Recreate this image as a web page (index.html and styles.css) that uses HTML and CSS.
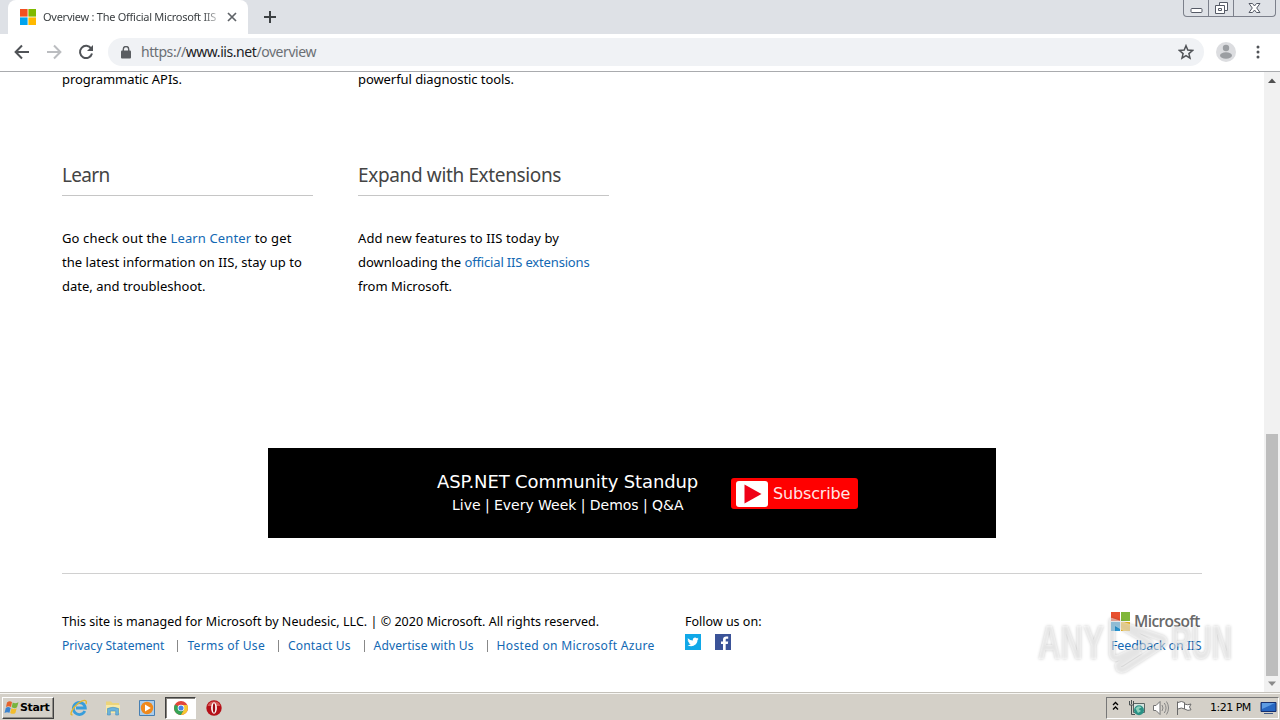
FILE: index.html
```html
<!DOCTYPE html>
<html lang="en">
<head>
<meta charset="utf-8">
<title>Overview : The Official Microsoft IIS Site</title>
<link rel="stylesheet" href="styles.css">
</head>
<body>
<div class="tabstrip">
  <div class="tab">
    <svg class="favicon" width="16" height="16" viewBox="0 0 16 16"><path fill="#f25022" d="M0 0h7.6v7.6H0z"/><path fill="#7fba00" d="M8.4 0H16v7.6H8.4z"/><path fill="#00a4ef" d="M0 8.4h7.6V16H0z"/><path fill="#ffb900" d="M8.4 8.4H16V16H8.4z"/></svg>
    <span class="tab-title">Overview : The Official Microsoft IIS</span>
    <svg class="tab-close" width="10" height="10" viewBox="0 0 10 10"><path d="M1 1l8 8M9 1L1 9" stroke="#5f6368" stroke-width="1.7"/></svg>
  </div>
  <svg class="new-tab" width="12" height="12" viewBox="0 0 12 12"><path d="M6 0v12M0 6h12" stroke="#3c4043" stroke-width="2"/></svg>
  <div class="window-buttons">
    <span class="wb wb-min"><svg width="13" height="16" viewBox="0 0 13 16"><rect x="1" y="8.5" width="11" height="4" rx="1" fill="#fff" stroke="#555a66"/></svg></span>
    <span class="wb wb-max"><svg width="13" height="16" viewBox="0 0 13 16"><g fill="#fff" stroke="#555a66"><path d="M4.500 2.500h8v8h-8z"/><path d="M.5 5.500h9v8h-9z"/><path d="M3.500 8.500h3v2h-3z"/></g></svg></span>
    <span class="wb wb-close"><svg width="13" height="16" viewBox="0 0 13 16"><path d="M1 3.500h3.500l2 2.500 2-2.500H12L8.700 8l3.300 4.500H8.500l-2-2.500-2 2.500H1L4.300 8z" fill="#fff" stroke="#555a66"/></svg></span>
  </div>
</div>
<div class="toolbar">
  <svg class="nav-icon" width="16" height="16" viewBox="0 0 16 16"><path d="M15 8H2M8 1.500L1.600 8 8 14.500" fill="none" stroke="#505357" stroke-width="2"/></svg>
  <svg class="nav-icon" width="16" height="16" viewBox="0 0 16 16"><path d="M1 8h13M8 1.500L14.400 8 8 14.500" fill="none" stroke="#bbbdc0" stroke-width="2"/></svg>
  <svg class="nav-icon" width="16" height="16" viewBox="0 0 16 16"><path d="M13.200 4.600A6.100 6.100 0 1 0 14 9.500" fill="none" stroke="#505357" stroke-width="2"/><path d="M15 1v6H9z" fill="#505357"/></svg>
  <div class="omnibox">
    <svg width="10" height="13" viewBox="0 0 10 13"><rect y="4.500" width="10" height="8" rx="1" fill="#5a5d61"/><path d="M2.300 5V3.200a2.700 2.700 0 0 1 5.400 0V5" fill="none" stroke="#5a5d61" stroke-width="1.400"/></svg>
    <span class="url">https://<b>www.iis.net</b>/overview</span>
    <svg class="star" width="16" height="16" viewBox="0 0 16 16"><path d="M8 1.700l1.800 4.400 4.700.4-3.600 3.100 1.100 4.600L8 11.700l-4 2.500 1.100-4.600L1.500 6.500l4.700-.4z" fill="none" stroke="#505357" stroke-width="1.500"/></svg>
  </div>
  <svg class="avatar" width="20" height="20" viewBox="0 0 20 20"><circle cx="10" cy="10" r="10" fill="#dcdde0"/><circle cx="10" cy="6" r="3.200" fill="#9b9ea2"/><ellipse cx="10" cy="13.500" rx="6" ry="3.200" fill="#9b9ea2"/></svg>
  <svg class="menu" width="4" height="14" viewBox="0 0 4 14"><g fill="#505357"><circle cx="2" cy="2" r="1.500"/><circle cx="2" cy="7" r="1.500"/><circle cx="2" cy="12" r="1.500"/></g></svg>
</div>
<div class="viewport">
  <main class="page">
    <div class="columns">
      <section class="col">
        <p class="line tail"><span class="t1">programmatic APIs.</span></p>
        <h2 class="learn">Learn</h2>
        <p class="line"><span class="t2">Go check out the <a>Learn Center</a> to get</span></p>
        <p class="line"><span class="t3">the latest information on IIS, stay up to</span></p>
        <p class="line">date, and troubleshoot.</p>
      </section>
      <section class="col">
        <p class="line tail"><span class="t5">powerful diagnostic tools.</span></p>
        <h2>Expand with Extensions</h2>
        <p class="line"><span class="t6">Add new features to IIS today by</span></p>
        <p class="line">downloading the <a class="t7">official IIS extensions</a></p>
        <p class="line">from Microsoft.</p>
      </section>
    </div>
    <div class="banner">
      <div class="banner-text">
        <div class="banner-title">ASP.NET Community Standup</div>
        <div class="banner-sub">Live | Every Week | Demos | Q&amp;A</div>
      </div>
      <div class="subscribe">
        <svg width="32" height="26" viewBox="0 0 32 26"><rect width="32" height="26" rx="3" fill="#fff"/><path d="M8.500 3.500L25.500 13l-17 9.500z" fill="#f00017"/></svg>
        <span>Subscribe</span>
      </div>
    </div>
    <footer class="footer">
      <div class="legal">
        <p class="line"><span class="f1">This site is managed for Microsoft by Neudesic, LLC. | © 2020 Microsoft. All rights reserved.</span></p>
        <p class="line links"><a>Privacy Statement</a><a class="terms">Terms of Use</a><a class="contact">Contact Us</a><a class="advertise">Advertise with Us</a><a class="hosted">Hosted on Microsoft Azure</a></p>
      </div>
      <div class="follow">
        <p class="line">Follow us on:</p>
        <div class="social">
          <svg width="16" height="16" viewBox="0 0 16 16"><path fill="#10a8e8" d="M0 0h16v16H0z"/><path fill="#fff" d="M2.800 4.200q2.200 2.300 5 2.300C7.500 3.300 10.500 2.800 11.700 4.200l1.600-.5-.8 1.300 1.200-.2-1.200 1.300c0 5-5.500 7.600-10 5.100q2 0 3.200-1-1.800-.3-2.200-1.700h1Q2.700 7.800 2.600 6.200l1 .2Q2.200 5.200 2.800 4.200z"/></svg>
          <svg width="16" height="16" viewBox="0 0 16 16"><path fill="#3b5398" d="M0 0h16v16H0z"/><path fill="#fff" d="M8 16V10H6V7.400h2V5.600C8 3.500 9.200 2.400 11.200 2.400h2v2.400h-1.300c-1 0-1.200.5-1.200 1.300v1.300h2.500L12.800 10h-2.100v6z"/></svg>
        </div>
      </div>
      <div class="brand">
        <div class="ms"><svg width="19" height="19" viewBox="0 0 19 19"><path fill="#e8502f" d="M0 0h9v9H0z"/><path fill="#80b73a" d="M10 0h9v9h-9z"/><path fill="#2a98d5" d="M0 10h9v9H0z"/><path fill="#efb928" d="M10 10h9v9h-9z"/></svg><span>Microsoft</span></div>
        <p class="line"><a class="f3">Feedback on IIS</a></p>
      </div>
    </footer>
  </main>
  <div class="scrollbar">
    <svg width="16" height="17" viewBox="0 0 16 17"><path d="M4 11l4-4.500 4 4.500z" fill="#505050"/></svg>
    <div class="thumb"></div>
    <svg width="16" height="17" viewBox="0 0 16 17"><path d="M4 6.500h8L8 11z" fill="#8a8a8a"/></svg>
  </div>
</div>
<div class="taskbar">
  <div class="start">
    <svg width="16" height="16" viewBox="0 0 16 16"><path fill="#e5622b" d="M3 2.500q2.500-2 5-.5L7 7Q4.500 5.500 2 7z"/><path fill="#77b43d" d="M8.700 2.400Q11 4 14.500 2.300L13 7.200Q10.500 9 7.700 7.300z"/><path fill="#3b83cf" d="M1.800 7.900Q4 6.300 6.700 7.900L5.500 12.800Q3 11.500.5 12.900z"/><path fill="#f3bd2d" d="M7.400 8.200q2.700 1.600 5.300 0L11.400 13Q9 14.700 6.200 13z"/></svg>
    <span>Start</span>
  </div>
  <div class="quick">
    <svg width="18" height="18" viewBox="0 0 18 18"><path d="M14.800 12A6 6 0 1 1 15.300 9H6" fill="none" stroke="#389ddb" stroke-width="2.800"/><path d="M2.500 15.500C-1 17 2 9 8 4.500S17.500.5 16 5" fill="none" stroke="#e4b72f" stroke-width="1.400"/></svg>
    <svg width="18" height="18" viewBox="0 0 18 18"><path d="M2 4V2.500h5L8.500 4H15v10H2z" fill="#ecd47b"/><path d="M2 6h14v8H2z" fill="#f8e9a6"/><path d="M3.500 16V9.500q5.500-2.500 11 0V16h-2.800v-4H6.300v4z" fill="#6cb4dc" stroke="#468eb9" stroke-width=".6"/></svg>
    <svg width="18" height="18" viewBox="0 0 18 18"><path d="M1.500 1.500h15v15h-15z" fill="#aacdec" stroke="#477fb2"/><circle cx="9" cy="9" r="6.200" fill="#ef891c"/><path d="M7 5.400v7.200L12.800 9z" fill="#fff"/></svg>
  </div>
  <div class="running">
    <svg width="14" height="14" viewBox="0 0 16 16"><circle cx="8" cy="8" r="8" fill="#e2463b"/><path d="M8 8L1.100 4A8 8 0 0 0 8 16l3.500-6z" fill="#35a456"/><path d="M8 16a8 8 0 0 0 7.100-11.500H8l3.500 5.500z" fill="#f6c831"/><circle cx="8" cy="8" r="3.800" fill="#fff"/><circle cx="8" cy="8" r="2.900" fill="#4683e8"/></svg>
  </div>
  <svg class="opera" width="16" height="16" viewBox="0 0 16 16"><circle cx="8" cy="8" r="7.700" fill="#b51018"/><path d="M1.500 6a7 7 0 0 1 13 0z" fill="#d65a57"/><ellipse cx="8" cy="8" rx="2.900" ry="5.700" fill="#fff"/><ellipse cx="8" cy="8" rx="1.200" ry="4.700" fill="#9e0b12"/></svg>
  <div class="tray">
    <svg class="chev" width="7" height="10" viewBox="0 0 7 10"><path d="M1 4l2.500-2.500L6 4M1 8.500L3.500 6 6 8.500" fill="none" stroke="#000" stroke-width="1.300"/></svg>
    <svg class="net" width="16" height="16" viewBox="0 0 16 16"><path d="M4.500 3.500h11v9h-11z" fill="#d5e3df" stroke="#5a6664"/><path d="M.5 1v4h4V1M2.500 0v4M2.500 5v9.500H6" fill="none" stroke="#4b5152"/><circle cx="10" cy="10.200" r="5" fill="#2a9185"/><path d="M6.500 8.500q3-4 6-1l-3 1.500 2.500 2-3 2z" fill="#8ed2bd"/></svg>
    <svg class="vol" width="18" height="16" viewBox="0 0 18 16"><path d="M1.500 5.500H4l4-4v13l-4-4H1.500z" fill="#fff" stroke="#737373"/><path d="M10 5q2 3 0 6M12.300 3q3.500 5 0 10M14.500 1.500q4 6.500 0 13" fill="none" stroke="#868686"/></svg>
    <svg class="flag" width="17" height="16" viewBox="0 0 17 16"><path d="M1.500 15V1.500M2 2.500q3.500-2 6.500 0v6.500Q5.500 7 2 9M8.500 4q3 1.500 6.500 0l-1.500 3L15 9.800q-3 1.500-6.500-.8" fill="#fff" stroke="#696969"/></svg>
    <span class="clock">1:21 PM</span>
    <svg class="desk" width="17" height="14" viewBox="0 0 17 14"><path d="M1 1.500h15v9H1z" fill="#2867c1" stroke="#172f6d"/><path d="M2 2h13L2 8z" fill="#5d9be2"/><path d="M4 12.500h9" stroke="#405a88"/></svg>
  </div>
</div>
<svg class="watermark" width="204" height="64" viewBox="0 0 204 64">
  <g class="wm-text"><text x="4" y="43" textLength="66" lengthAdjust="spacingAndGlyphs">ANY</text><text x="137" y="43" textLength="61" lengthAdjust="spacingAndGlyphs">RUN</text></g>
  <path class="wm-play" d="M78 5L128 22q5 3 0 7L91 53q-7 3-7-4l22-14M78 5v33q1 6 8 3l30-14-38-22z"/>
</svg>
</body>
</html>
```

FILE: styles.css
```css
* { box-sizing: border-box; }
body { margin: 0; width: 1280px; height: 720px; overflow: hidden; background: #fff; color: #000; font-family: "Noto Sans", "Open Sans", sans-serif; font-size: 13px; display: flex; flex-direction: column; position: relative; }
svg { display: block; flex: none; }
p, h2 { margin: 0; }
p, h2, span, a { white-space: nowrap; }

.tabstrip { height: 34px; flex: none; display: flex; background: #dee1e6; }
.tab { width: 240px; margin-left: 8px; padding: 0 11px 0 12px; display: flex; align-items: center; background: #fff; border-radius: 8px 8px 0 0; }
.tab-title { width: 176px; margin: -2px 0 0 7px; overflow: hidden; font-size: 11px; letter-spacing: -.26px; color: #3c4043; -webkit-mask-image: linear-gradient(90deg, #000 160px, transparent 180px); mask-image: linear-gradient(90deg, #000 160px, transparent 180px); }
.tab-close { margin-left: 8px; }
.new-tab { margin: 11px 0 0 16px; }
.window-buttons { display: flex; height: 17px; width: 93px; margin: 0 4px 0 auto; border: 1px solid #7c808b; border-top: 0; border-radius: 0 0 4px 4px; }
.wb { display: flex; justify-content: center; border-right: 1px solid #7c808b; }
.wb-min { width: 25px; }
.wb-max { width: 25px; }
.wb-close { flex: 1; border-right: 0; }

.toolbar { height: 38px; flex: none; display: flex; align-items: center; padding: 0 20px 1px 14px; border-bottom: 1px solid #a9abae; }
.nav-icon { margin-right: 16px; }
.omnibox { height: 28px; width: 1096px; margin-left: -2px; padding: 0 10px 0 13px; display: flex; align-items: center; background: #f0f2f5; border-radius: 14px; }
.url { margin: -1px 0 0 10px; font-size: 14px; letter-spacing: -.44px; color: #6b6f74; }
.url b { font-weight: 400; color: #202124; }
.star { margin-left: auto; }
.avatar { margin-left: 12px; }
.menu { margin-left: 20px; }

.viewport { height: 620px; flex: none; display: flex; }
.page { width: 1264px; padding-left: 62px; }
.columns { display: flex; gap: 45px; height: 376px; }
.col { width: 251px; }
.line { height: 24px; line-height: 24px; font-size: 13px; }
.tail { margin-top: -5px; }
h2 { height: 30px; margin: 75px 0 30px; line-height: 19px; font-size: 19px; letter-spacing: -.36px; font-weight: 400; color: #444; border-bottom: 1px solid #c6c6c6; }
.learn { letter-spacing: -.7px; }
a { color: #1268b3; }
.t1 { letter-spacing: -.06px; }
.t2 { letter-spacing: .13px; }
.t3 { letter-spacing: .03px; }
.t5 { letter-spacing: -.07px; }
.t6 { letter-spacing: .1px; }
.t7 { letter-spacing: -.17px; }
.banner { width: 728px; height: 90px; margin-left: 206px; padding-left: 169px; display: flex; background: #000; color: #fff; font-family: "DejaVu Sans", sans-serif; }
.banner-text { width: 262px; margin-top: 22px; }
.banner-title { font-size: 18px; line-height: 24px; letter-spacing: -.12px; white-space: nowrap; }
.banner-sub { padding-left: 15px; font-size: 14px; line-height: 22px; letter-spacing: -.03px; white-space: nowrap; }
.subscribe { width: 127px; height: 31px; margin: 30px 0 0 32px; padding-left: 5px; display: flex; align-items: center; gap: 5px; background: #f00; border-radius: 3px; font-size: 16px; letter-spacing: -.15px; color: #ffe4e4; }
.footer { width: 1140px; margin-top: 35px; padding-top: 35px; display: flex; border-top: 1px solid #d0d0d0; }
.footer .line { font-size: 12.500px; line-height: 26px; }
.f1 { letter-spacing: .03px; }
.legal { width: 623px; }
.footer .links { display: flex; font-size: 12.100px; }
.links a + a::before { content: ""; display: inline-block; width: 1px; height: 12px; margin: 0 9px 0 13px; vertical-align: -2px; background: #888; }
.terms { letter-spacing: .3px; }
.contact { letter-spacing: .1px; }
.advertise { letter-spacing: .08px; }
.hosted { letter-spacing: .28px; }
.social { display: flex; gap: 14px; margin-top: 1px; }
.brand { margin-left: auto; width: 91px; }
.ms { height: 24px; display: flex; align-items: center; gap: 4px; color: #696969; font: 600 15.500px "Open Sans", sans-serif; letter-spacing: -.6px; }
.f3 { letter-spacing: -.15px; }
.scrollbar { width: 16px; display: flex; flex-direction: column; background: #f1f1f1; }
.thumb { width: 12px; height: 242px; margin: auto 2px -1px; background: #bdbdbd; }

.taskbar { height: 28px; flex: none; display: flex; align-items: center; padding-top: 2px; background: #d4d0c8; border-top: 1px solid #c4c1ba; box-shadow: inset 0 1px #f8f7f4; font-family: "DejaVu Sans", sans-serif; }
.start { width: 52px; height: 22px; margin-left: 2px; padding-left: 1px; display: flex; align-items: center; border: 1px solid; border-color: #fff #404040 #404040 #fff; box-shadow: inset -1px -1px #918e88; font: 700 11px "DejaVu Sans", sans-serif; letter-spacing: -.4px; }
.quick { display: flex; gap: 16px; margin-left: 16px; }
.running { width: 31px; height: 22px; margin-left: 9px; display: flex; align-items: center; justify-content: center; background: #fff; border: 1px solid; border-color: #404040 #fff #fff #404040; box-shadow: inset 1px 1px #85827d; }
.opera { margin-left: 10px; }
.tray { width: 173px; height: 22px; margin: 0 1px 0 auto; padding-left: 5px; display: flex; align-items: center; border: 1px solid; border-color: #777 #fff #fff #777; }
.chev { margin-top: -3px; }
.net { margin-left: 10px; }
.vol { margin-left: 7px; }
.flag { margin-left: 6px; }
.clock { margin-left: 17px; font: 11px "DejaVu Sans", sans-serif; letter-spacing: -.5px; }
.desk { margin: 0 1px 0 auto; }

.watermark { position: absolute; left: 1034px; top: 616px; filter: drop-shadow(0 0 1.500px rgba(0,0,0,.42)); }
.wm-text { font: 700 49px "Liberation Sans", sans-serif; fill: #fff; fill-opacity: .5; }
.wm-play { fill: none; stroke: #fff; stroke-opacity: .5; stroke-width: 6; stroke-linejoin: round; }
```
